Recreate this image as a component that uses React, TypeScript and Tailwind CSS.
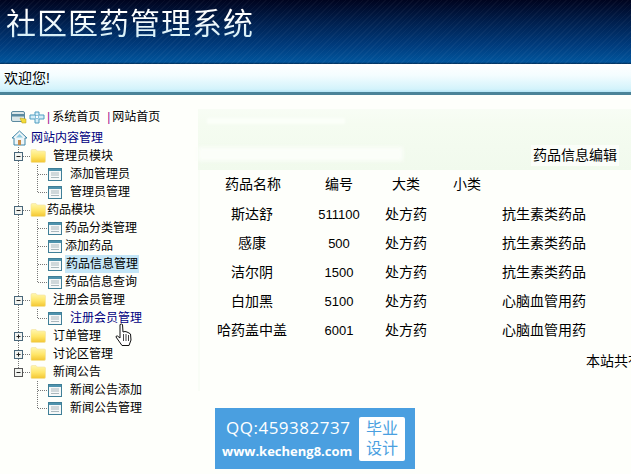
import React from "react";

const FONT = "font-['Liberation_Sans','Noto_Sans_CJK_SC',sans-serif]";

function Folder() {
  return (
    <svg width="16" height="14" viewBox="0 0 16 14" className="shrink-0">
      <defs>
        <linearGradient id="fold" x1="0" y1="0" x2="0" y2="1">
          <stop offset="0" stopColor="#fff7b0" />
          <stop offset="0.55" stopColor="#ffe566" />
          <stop offset="1" stopColor="#f2c531" />
        </linearGradient>
      </defs>
      <path d="M1 3 L1 12.5 Q1 13.5 2 13.5 L14 13.5 Q15.5 13.5 15.5 12 L15.5 3 Q15.5 2 14 2 L7 2 L6 .5 L2 .5 Q1 .5 1 2 Z" fill="url(#fold)" stroke="#f3e3a0" strokeWidth="0.6" />
    </svg>
  );
}

function Doc() {
  return (
    <svg width="14" height="13" viewBox="0 0 14 13" className="shrink-0">
      <rect x="0.5" y="0.5" width="13" height="12" fill="#f6f8f8" stroke="#3f7f97" />
      <rect x="1" y="1" width="12" height="2" fill="#4f93ad" />
      <path d="M3 5h8M3 7h8M3 9.5h8" stroke="#aab8bd" strokeWidth="1" />
    </svg>
  );
}

type Kind = "group" | "child";

function Lines({ kind, open, last, groupLast, childLast }: { kind: Kind; open?: boolean; last?: boolean; groupLast?: boolean; childLast?: boolean }) {
  const dot = { stroke: "#777", strokeDasharray: "1 1", strokeWidth: 1 };
  if (kind === "group") {
    return (
      <svg width="20" height="18" viewBox="0 0 20 18" className="shrink-0">
        <line x1="8.5" y1="0" x2="8.5" y2={last ? 9 : 18} {...dot} />
        <line x1="13" y1="9.5" x2="20" y2="9.5" {...dot} />
        <rect x="4.5" y="5.5" width="8" height="8" fill="#f2f4f0" stroke={open && last ? "#555" : "#49677a"} />
        <line x1="6.5" y1="9.5" x2="10.5" y2="9.5" stroke="#222" />
        {!open && <line x1="8.5" y1="7.5" x2="8.5" y2="11.5" stroke="#222" />}
      </svg>
    );
  }
  return (
    <svg width="38" height="18" viewBox="0 0 38 18" className="shrink-0">
      {!groupLast && <line x1="8.5" y1="0" x2="8.5" y2="18" {...dot} />}
      <line x1="27.5" y1="0" x2="27.5" y2={childLast ? 9 : 18} {...dot} />
      <line x1="28" y1="9.5" x2="38" y2="9.5" {...dot} />
    </svg>
  );
}

function Group({ label, open, last, tight }: { label: string; open?: boolean; last?: boolean; tight?: boolean }) {
  return (
    <div className="flex h-[18px] items-center">
      <Lines kind="group" open={open} last={last} />
      <Folder />
      <span className={tight ? "pl-[1px]" : "pl-[7px]"}>{label}</span>
    </div>
  );
}

function Child({ label, wide, active, link, groupLast, childLast }: { label: string; wide?: boolean; active?: boolean; link?: boolean; groupLast?: boolean; childLast?: boolean }) {
  return (
    <div className="flex h-[18px] items-center">
      <Lines kind="child" groupLast={groupLast} childLast={childLast} />
      <Doc />
      <span className={`${wide ? "ml-[8px]" : "ml-[3px]"} ${active ? "bg-[#c4e6f7] px-[1px]" : ""} ${link ? "text-[#00007f]" : ""}`}>{label}</span>
    </div>
  );
}

const rows = [
  ["斯达舒", "511100", "处方药", "抗生素类药品"],
  ["感康", "500", "处方药", "抗生素类药品"],
  ["洁尔阴", "1500", "处方药", "抗生素类药品"],
  ["白加黑", "5100", "处方药", "心脑血管用药"],
  ["哈药盖中盖", "6001", "处方药", "心脑血管用药"],
];

export default function App() {
  return (
    <div className={`relative h-[474px] w-[631px] overflow-hidden bg-[#fefffb] text-black ${FONT}`}>
      {/* header */}
      <div className="h-[64px] bg-[repeating-linear-gradient(135deg,rgba(255,255,255,0.035)_0px,rgba(255,255,255,0.035)_1px,transparent_1px,transparent_4px),linear-gradient(180deg,#00041f_0%,#00204f_35%,#003b7c_70%,#01559c_97%,#012c55_100%)] pl-[6px] pt-[5px]">
        <div className="bg-[linear-gradient(180deg,#ffffff_30%,#c6e9f5_100%)] bg-clip-text text-[30px] leading-[38px] tracking-[1px] text-transparent">社区医药管理系统</div>
      </div>
      {/* welcome */}
      <div className="flex h-[28px] items-center bg-[linear-gradient(180deg,#ffffff_0%,#f4fdff_40%,#d3f3fb_90%,#b5e5f6_100%)] pl-[4px] text-[14px]">欢迎您!</div>
      <div className="h-[3px] bg-[#4b8398]" />

      <div className="flex">
        {/* sidebar */}
        <div className="w-[198px] shrink-0 pl-[10px] pt-[13px] text-[12px] leading-[18px]">
          <div className="flex h-[18px] items-center">
            <svg width="16" height="14" viewBox="0 0 16 14" className="ml-[1px] shrink-0">
              <rect x="0.5" y="1.5" width="13" height="10" rx="1.5" fill="#dbe6e8" stroke="#5b8aa0" />
              <rect x="1" y="4" width="12" height="2.5" fill="#5b8aa0" />
              <path d="M9 8 L15 9 L15 13 L11 13 Z" fill="#f3dc3a" stroke="#b59a1a" strokeWidth="0.5" />
            </svg>
            <svg width="16" height="15" viewBox="0 0 16 15" className="ml-[2px] shrink-0">
              <path d="M6 2h4v3h5v4h-5v4H6V9H1V5h5Z" fill="#d5eef8" stroke="#4f9dc0" />
              <rect x="6.500" y="5.500" width="3" height="3" fill="#fff" stroke="#4f9dc0" strokeWidth="0.6" />
            </svg>
            <span className="ml-[2px] text-[#a0108f]">|</span>
            <span className="ml-[2px]">系统首页</span>
            <span className="ml-[7px] text-[#a0108f]">|</span>
            <span className="ml-[2px]">网站首页</span>
          </div>
          <div className="mt-[3px] flex h-[18px] items-center text-[#00007f]">
            <svg width="17" height="16" viewBox="0 0 17 16" className="ml-[1px] shrink-0">
              <path d="M8.5 1 L16 8 L14 8 L14 15 L3 15 L3 8 L1 8 Z" fill="#eef6f8" stroke="#3f86a8" />
              <path d="M8.5 4 L12 7.500 L5 7.500 Z" fill="#8fcbe2" />
              <rect x="7" y="10" width="3" height="5" fill="#c98d4a" />
            </svg>
            <span className="ml-[3px]">网站内容管理</span>
          </div>
          <Group label="管理员模块" open />
          <Child label="添加管理员" wide />
          <Child label="管理员管理" wide childLast />
          <Group label="药品模块" open tight />
          <Child label="药品分类管理" />
          <Child label="添加药品" />
          <Child label="药品信息管理" active />
          <Child label="药品信息查询" childLast />
          <Group label="注册会员管理" open />
          <Child label="注册会员管理" wide link childLast />
          <Group label="订单管理" />
          <Group label="讨论区管理" />
          <Group label="新闻公告" open last />
          <Child label="新闻公告添加" wide groupLast />
          <Child label="新闻公告管理" wide groupLast childLast />
        </div>

        {/* main */}
        <div className="min-w-0 flex-1 pt-[14px] text-[14px]">
          <div className="flex h-[61px] flex-col bg-[linear-gradient(180deg,#f8fdf5_0%,#f5fcf1_25%,#f1faed_100%)]">
            <div className="ml-[9px] mt-[9px] h-[6px] w-[138px] bg-[#fbfff9] blur-[1px]" />
            <div className="flex flex-1 items-end justify-between pb-[4px] pr-[12px]">
              <div className="mb-[5px] h-[14px] w-[205px] bg-[#fbfef9] blur-[2px]" />
              <span className="bg-[#fbfef9] px-[2px]">药品信息编辑</span>
            </div>
          </div>
          <div className="border-l-[2px] border-[#f9fdf6] pt-[3px]">
            <div className="grid h-[22px] grid-cols-[96px_84px_50px_72px] items-center text-center">
              <span className="ml-[10px]">药品名称</span>
              <span className="ml-[2px]">编号</span>
              <span className="ml-[2px]">大类</span>
              <span className="ml-[2px]">小类</span>
            </div>
            <div className="pt-[5px]">
              {rows.map((r) => (
                <div key={r[0]} className="grid h-[29px] grid-cols-[96px_84px_50px_196px] items-center text-center">
                  <span className="ml-[8px] whitespace-nowrap">{r[0]}</span>
                  <span className="ml-[2px] text-[13px]">{r[1]}</span>
                  <span className="ml-[2px] whitespace-nowrap">{r[2]}</span>
                  <span className="ml-[2px] whitespace-nowrap pl-[30px]">{r[3]}</span>
                </div>
              ))}
            </div>
            <div className="mt-[6px] h-[40px] whitespace-nowrap pl-[386px] leading-[20px]">本站共有</div>
          </div>
        </div>
      </div>

      {/* watermark */}
      <div className="absolute left-[215px] top-[408px] flex h-[61px] w-[200px] items-center bg-[#4a9fe0] pl-[7px] pr-[10px] text-white">
        <div className="flex-1">
          <div className="pl-[4px] font-['Open_Sans',sans-serif] text-[17px] font-medium leading-[22px] tracking-[0.5px]">QQ:459382737</div>
          <div className="mt-[3px] font-['Open_Sans',sans-serif] text-[13px] font-bold leading-[18px]">www.kecheng8.com</div>
        </div>
        <div className="flex h-[44px] w-[46px] flex-col items-center justify-center rounded-[2px] bg-white text-[16px] leading-[20px] text-[#4a9fe0]">
          <span>毕业</span>
          <span>设计</span>
        </div>
      </div>

      {/* cursor */}
      <svg width="18" height="24" viewBox="0 0 18 24" className="absolute left-[115px] top-[323px]">
        <path d="M5 1.500 Q6.500 .5 7.500 1.500 L8 9 L10 8.500 L12 9 L14 10 L15.500 11 L16 17 L14 22.500 L7 22.500 L1 14 Q1 12.500 2.500 13 L5 15 Z" fill="#fff" stroke="#111" strokeWidth="1" />
        <path d="M8.500 11v7M11 11v7M13.500 12v6" stroke="#111" strokeWidth="0.8" />
      </svg>
    </div>
  );
}
